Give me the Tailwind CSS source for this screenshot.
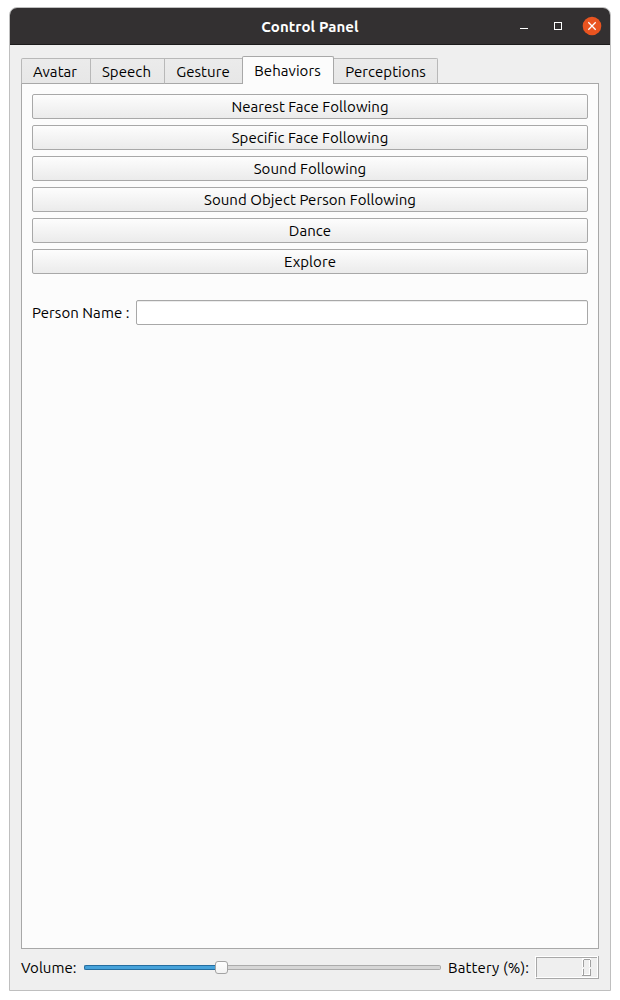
<!DOCTYPE html>
<html lang="en">
<head>
<meta charset="utf-8">
<title>Control Panel</title>
<script src="https://cdn.jsdelivr.net/npm/@tailwindcss/browser@4"></script>
</head>
<body class="bg-white">
<div class="h-[1000px] w-[620px] overflow-hidden pt-[7px] pl-[9px] font-['Ubuntu','Noto_Sans',sans-serif] text-[15px] leading-[20px] tracking-[0.06px] whitespace-nowrap text-black">
  <div class="flex h-[984px] w-[602px] flex-col overflow-hidden rounded-t-[8px] border border-[#bfbfbf] bg-[#efefef]">
    <header class="flex h-[37px] shrink-0 items-center border-b border-[#1c1b1b] bg-[#333031] text-white">
      <div class="w-[110px]"></div>
      <h1 class="flex-1 pt-[2px] text-center text-[15px] font-bold tracking-[0.1px]"><span>Control Panel</span></h1>
      <div class="flex w-[110px]">
        <svg class="h-[36px] w-[110px]" viewBox="0 0 110 36" fill="none">
          <path d="M20 20.5h8" stroke="#fff"/>
          <rect x="54.5" y="14.5" width="7" height="7" stroke="#fff"/>
          <circle cx="92" cy="18" r="9.3" fill="#e95420"/>
          <path d="M88.3 14.3l7.4 7.4M95.7 14.3l-7.4 7.4" stroke="#fff" stroke-width="1.3"/>
        </svg>
      </div>
    </header>
    <nav class="z-10 -mb-px ml-[11px] flex h-[39px] shrink-0 items-end">
      <div class="flex h-[26px] w-[70px] items-center justify-center rounded-tl-[2px] border border-[#b8b8b8] border-b-[#a8a8a8] bg-linear-to-b from-[#ebebeb] to-[#e7e7e7] pt-[2px] pr-[2px]"><span>Avatar</span></div>
      <div class="-ml-px flex h-[26px] w-[75px] items-center justify-center border border-[#b8b8b8] border-b-[#a8a8a8] bg-linear-to-b from-[#ebebeb] to-[#e7e7e7] pt-[2px] pr-[2px]"><span>Speech</span></div>
      <div class="-ml-px flex h-[26px] w-[79px] items-center justify-center border border-[#b8b8b8] border-b-[#a8a8a8] bg-linear-to-b from-[#ebebeb] to-[#e7e7e7] pt-[2px] pr-px"><span>Gesture</span></div>
      <div class="z-10 -ml-px flex h-[28px] w-[92px] items-center justify-center rounded-t-[2px] border border-b-0 border-[#a8a8a8] bg-[#fcfcfc] pr-px"><span>Behaviors</span></div>
      <div class="-ml-px flex h-[26px] w-[105px] items-center justify-center rounded-tr-[2px] border border-[#b8b8b8] border-b-[#a8a8a8] bg-linear-to-b from-[#ebebeb] to-[#e7e7e7] pt-[2px]"><span>Perceptions</span></div>
    </nav>
    <main class="mx-[11px] h-[866px] shrink-0 border border-[#a8a8a8] bg-[#fcfcfc] px-[10px] pt-[10px]">
      <div class="flex flex-col gap-[6px]">
        <button class="flex h-[25px] items-center justify-center rounded-[2px] border border-[#a8a8a8] bg-linear-to-b from-[#fdfdfd] to-[#ebebeb]"><span>Nearest Face Following</span></button>
        <button class="flex h-[25px] items-center justify-center rounded-[2px] border border-[#a8a8a8] bg-linear-to-b from-[#fdfdfd] to-[#ebebeb]"><span>Specific Face Following</span></button>
        <button class="flex h-[25px] items-center justify-center rounded-[2px] border border-[#a8a8a8] bg-linear-to-b from-[#fdfdfd] to-[#ebebeb]"><span>Sound Following</span></button>
        <button class="flex h-[25px] items-center justify-center rounded-[2px] border border-[#a8a8a8] bg-linear-to-b from-[#fdfdfd] to-[#ebebeb]"><span>Sound Object Person Following</span></button>
        <button class="flex h-[25px] items-center justify-center rounded-[2px] border border-[#a8a8a8] bg-linear-to-b from-[#fdfdfd] to-[#ebebeb]"><span>Dance</span></button>
        <button class="flex h-[25px] items-center justify-center rounded-[2px] border border-[#a8a8a8] bg-linear-to-b from-[#fdfdfd] to-[#ebebeb]"><span>Explore</span></button>
      </div>
      <div class="mt-[26px] flex h-[25px] items-center">
        <label class="w-[104px]"><span>Person Name :</span></label>
        <div class="h-[25px] flex-1 rounded-[2px] border border-[#a8a8a8] bg-white shadow-[inset_0_1px_0_#ececec]"></div>
      </div>
    </main>
    <footer class="mx-[11px] flex h-[37px] items-center">
      <div class="w-[63px]"><span>Volume:</span></div>
      <div class="flex w-[357px] items-center">
        <div class="h-[5px] w-[131px] rounded-l-[2px] border border-r-0 border-[#246d9f] bg-[#46a2da]"></div>
        <div class="h-[13px] w-[13px] rounded-[3px] border border-[#a3a3a3] bg-linear-to-b from-[#fefefe] to-[#f3f3f3]"></div>
        <div class="h-[5px] flex-1 rounded-r-[2px] border border-l-0 border-[#ababab] bg-[#d6d6d6]"></div>
      </div>
      <div class="ml-[7px] w-[87px] tracking-[0.12px]"><span>Battery (%):</span></div>
      <svg class="h-[23px] w-[64px]" viewBox="0 0 64 23" fill="none" shape-rendering="crispEdges" role="img" aria-label="0">
        <path d="M.5 22V.5H63" stroke="#fff"/>
        <path d="M1.5 21V1.5H62" stroke="#a8a8a8"/>
        <path d="M2 21.5H62.5V1" stroke="#fff"/>
        <path d="M1 22.5H63.5V0" stroke="#a8a8a8"/>
        <path d="M47 2.5H56M47.5 3V11M47.5 12V20M54.5 4V11M54.5 12V20M48 18.5H54" stroke="#fff"/>
        <path d="M49 3.5H55M48.5 4V11M48.5 13V19M55.5 4V11M55.5 13V19M47 19.5H56" stroke="#a0a0a0"/>
      </svg>
    </footer>
  </div>
</div>
</body>
</html>
